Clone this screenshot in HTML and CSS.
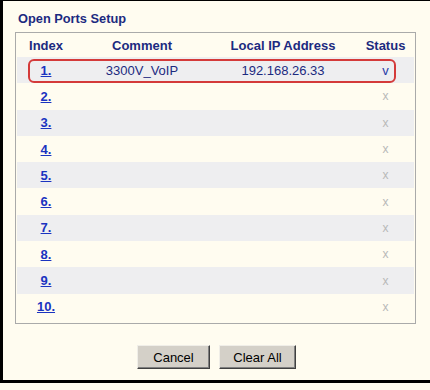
FILE: index.html
```html
<!DOCTYPE html>
<html lang="en">
<head>
  <meta charset="UTF-8" />
  <title>Open Ports Setup</title>
  <link rel="stylesheet" href="styles.css">
</head>
<body>
  <div class="window">
    <h1 class="title">Open Ports Setup</h1>

    <div class="ports-box">
      <table class="ports">
        <thead>
          <tr>
            <th class="col-index">Index</th>
            <th class="col-comment">Comment</th>
            <th class="col-ip">Local IP Address</th>
            <th class="col-status">Status</th>
          </tr>
        </thead>
        <tbody>
          <tr class="shade">
            <td><a href="#">1.</a></td>
            <td>3300V_VoIP</td>
            <td>192.168.26.33</td>
            <td class="on">v</td>
          </tr>
          <tr><td><a href="#">2.</a></td><td></td><td></td><td class="off">x</td></tr>
          <tr class="shade"><td><a href="#">3.</a></td><td></td><td></td><td class="off">x</td></tr>
          <tr><td><a href="#">4.</a></td><td></td><td></td><td class="off">x</td></tr>
          <tr class="shade"><td><a href="#">5.</a></td><td></td><td></td><td class="off">x</td></tr>
          <tr><td><a href="#">6.</a></td><td></td><td></td><td class="off">x</td></tr>
          <tr class="shade"><td><a href="#">7.</a></td><td></td><td></td><td class="off">x</td></tr>
          <tr><td><a href="#">8.</a></td><td></td><td></td><td class="off">x</td></tr>
          <tr class="shade"><td><a href="#">9.</a></td><td></td><td></td><td class="off">x</td></tr>
          <tr><td><a href="#">10.</a></td><td></td><td></td><td class="off">x</td></tr>
        </tbody>
      </table>
      <div class="highlight"></div>
    </div>

    <div class="actions">
      <button class="btn btn-cancel">Cancel</button>
      <button class="btn btn-clear">Clear All</button>
    </div>
  </div>
</body>
</html>
```

FILE: styles.css
```css
body {
  margin: 0;
  background: #fffcf0;
  font-family: "Liberation Sans", Arial, sans-serif;
  font-size: 13px;
}
.window {
  height: 379px;
  border-top: 1px solid #000;
  border-left: 3px solid #000;
  border-bottom: 3px solid #000;
  background: #fffcf0;
}
.title {
  margin: 0;
  padding: 10px 0 0 15px;
  height: 21px;
  font-size: 12.8px;
  font-weight: bold;
  line-height: 16px;
  color: #1c2a80;
}
.ports-box {
  position: relative;
  margin-left: 12px;
  width: 399px;
  height: 290px;
  border: 1px solid #aaa;
}
.ports {
  width: 397px;
  margin: 0 1px;
  border-collapse: collapse;
}
.ports th {
  height: 24px;
  padding: 0;
  font-weight: bold;
  color: #1c2a80;
  text-align: center;
}
.col-index { width: 58px; }
.col-comment { width: 134px; }
.col-ip { width: 148px; }
.col-status { width: 57px; }
.ports td {
  height: 26.3px;
  padding: 0;
  text-align: center;
  color: #1c2a80;
}
.ports tr.shade td {
  background: #eeeef0;
}
.ports a {
  color: #1a33c0;
  font-weight: bold;
}
.ports td.on {
  color: #2a3aa8;
}
.ports td.off {
  color: #b8b8b8;
  font-size: 12px;
}
.highlight {
  position: absolute;
  left: 12px;
  top: 26px;
  width: 364px;
  height: 20px;
  border: 2px solid #d43a3a;
  border-radius: 6px;
}
.actions {
  display: flex;
  justify-content: center;
  gap: 9px;
  margin-top: 21px;
}
.btn {
  height: 24px;
  padding: 0;
  background: #d4d0c8;
  border: 1px solid #f0eee8;
  border-right-color: #404040;
  border-bottom-color: #404040;
  box-shadow: inset -1px -1px #808080;
  font-family: "Liberation Sans", Arial, sans-serif;
  font-size: 13px;
  color: #000;
}
.btn-cancel { width: 73px; }
.btn-clear { width: 77px; }
```
